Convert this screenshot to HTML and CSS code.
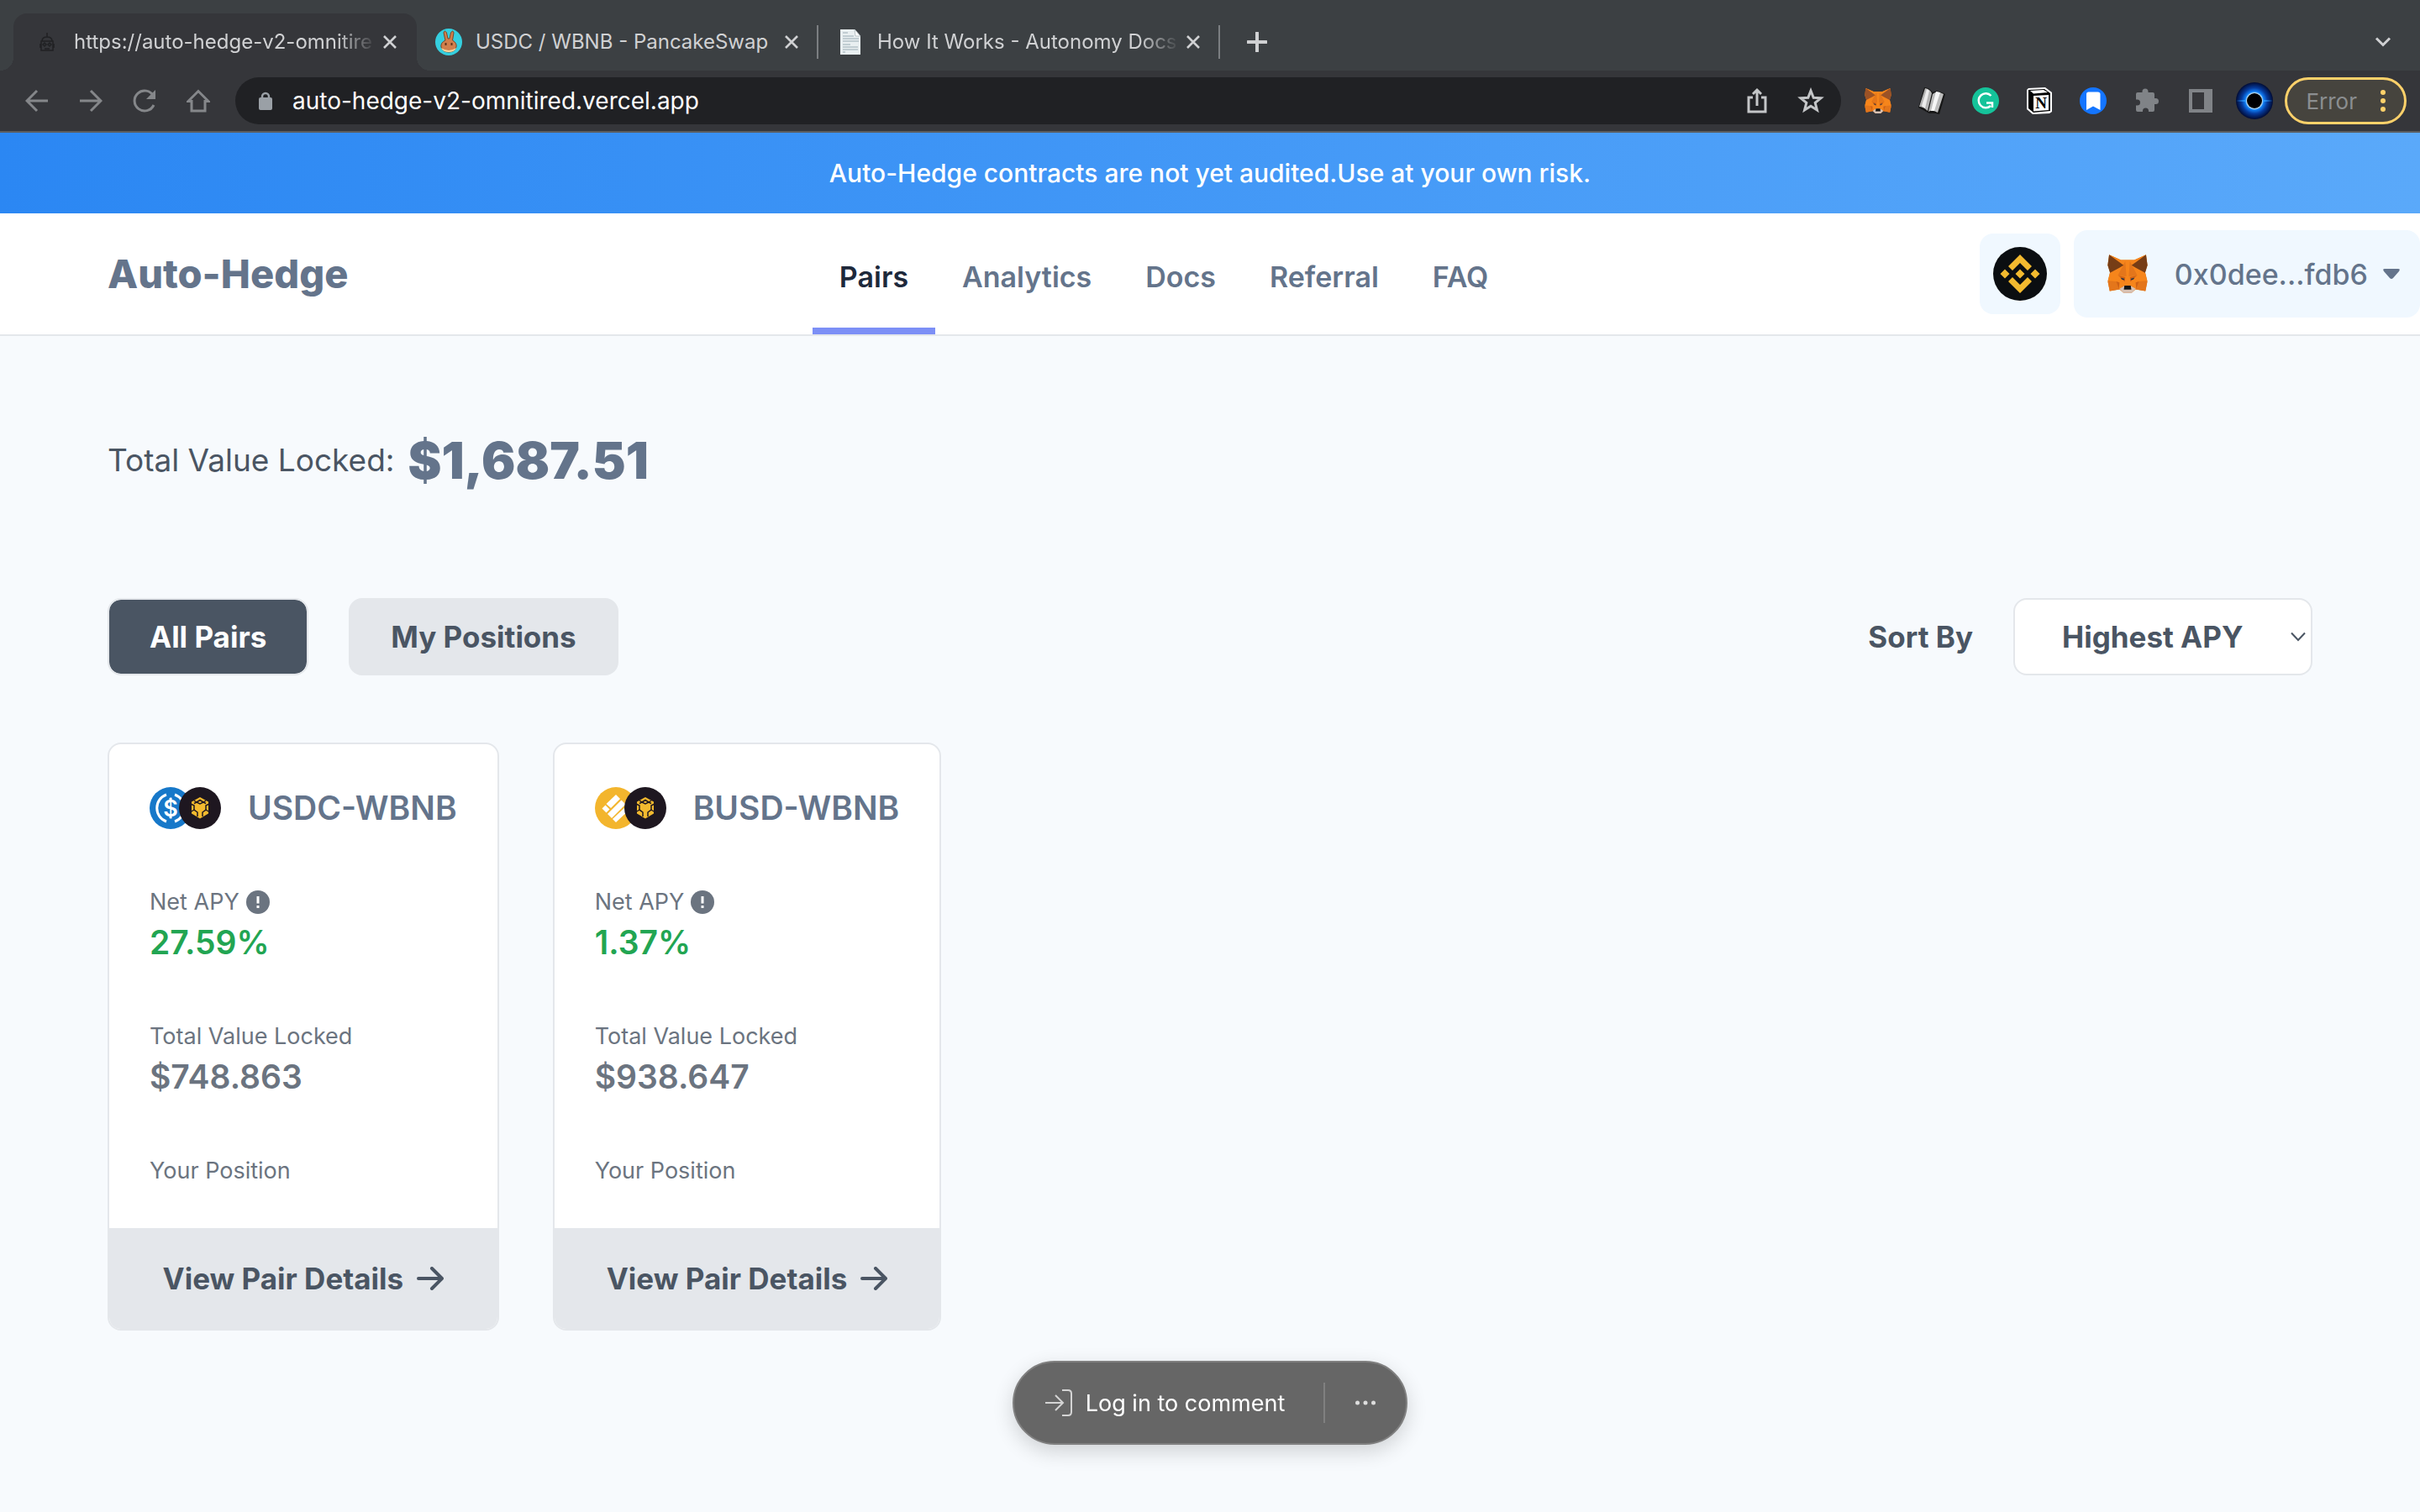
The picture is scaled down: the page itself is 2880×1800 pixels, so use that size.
FILE: index.html
```html
<!DOCTYPE html>
<html lang="en">
<head>
<meta charset="utf-8">
<title>Auto-Hedge</title>
<meta name="viewport" content="width=device-width, initial-scale=1">
<link rel="stylesheet" href="styles.css">
</head>
<body>
<svg class="defs" aria-hidden="true">
  <symbol id="fox" viewBox="0 0 140 132">
    <path fill="#e2761b" d="M6 0 47 18H93L134 0 139 36 131 60 139 92 132 126 98 120 84 132H56L42 120 8 126 1 92 9 60 1 36Z"/>
    <path fill="#f6851b" d="M47 18H93L134 0 98 44 131 62 138 90 104 93 98 120 84 108H56L42 120 36 93 2 90 9 62 42 44 6 0Z"/>
    <path fill="#e4761b" d="M62 22 66 75 36 72ZM78 22 74 75 104 72ZM31 96 42 120 8 126 2 94ZM109 96 98 120 132 126 138 94Z"/>
    <path fill="#cd6116" d="M31 93 42 96 40 118ZM109 93 98 96 100 118ZM38 72 62 78 60 94ZM102 72 78 78 80 94Z"/>
    <path fill="currentColor" d="M6 0 56 36 43 44 9 62 1 36ZM134 0 84 36 97 44 131 62 139 36Z"/>
    <path fill="#233447" d="M46 80 58 83 59 88 50 86ZM94 80 82 83 81 88 90 86Z"/>
    <path fill="#d7c1b3" d="M42 118 58 108H82L98 118 84 132H56Z"/>
    <path fill="#161616" d="M59 107H81L83 121H57Z"/>
  </symbol>
  <symbol id="close" viewBox="0 0 16 16"><path d="M1 1 15 15M15 1 1 15" stroke="currentColor" stroke-width="2.6" fill="none"/></symbol>
  <symbol id="wbnb" viewBox="0 0 50 50">
    <circle cx="25" cy="25" r="25" fill="#1e1720"/>
    <path fill="#f3ba2f" d="M25 12 35 17.500V31.500L25 37.500 15 31.500V17.500Z"/>
    <path fill="none" stroke="#1e1720" stroke-width="1.500" d="M14 20 18 22V27L22 30V35M36 20 32 22V27L28 30V35M18 19.500 21 18 25 20 29 18 32 19.500M21 18 25 15.500 29 18M21 18 18 16M29 18 32 16M15 29 18 27M35 29 32 27"/>
  </symbol>
  <symbol id="info" viewBox="0 0 28 28"><circle cx="14" cy="14" r="14" fill="currentColor"/><path d="M14 7V15.500M14 18V21" stroke="#fff" stroke-width="3"/></symbol>
  <symbol id="arrow" viewBox="0 0 32 28"><path d="M2 14H30M18 2 30 14 18 26" fill="none" stroke="currentColor" stroke-width="4" stroke-linecap="round" stroke-linejoin="round"/></symbol>
</svg>

<div class="browser">
  <div class="tabstrip">
    <div class="tab tab-active">
      <svg class="tab-icon" viewBox="0 0 32 32"><g fill="none" stroke="#202123" stroke-width="1.500"><path d="M16 5V10M10 15Q10 10 16 10T22 15M9 15H23V26H9ZM8 18V23M24 18V23"/><path d="m11 19 2-2 2 2-2 2ZM17 19l2-2 2 2-2 2ZM13 24H19"/></g></svg>
      <span class="tab-title fade">https://auto-hedge-v2-omnitire</span>
      <button class="tab-close" aria-label="Close tab"><svg><use href="#close"/></svg></button>
    </div>
    <div class="tab">
      <svg class="tab-icon" viewBox="0 0 32 32"><circle cx="16" cy="16" r="16" fill="#35cfdf"/><path d="M12 14 10 5Q11 1 13.500 5L15 12H17L18.500 5Q21 1 22 5L20.500 14Q26 17 25 22 23 28 16 28T7 22Q6 17 12 14Z" fill="#d17f4c" stroke="#7a4526"/><path d="M7 23Q16 29 25 23 23 28 16 28T7 23Z" fill="#f6d8a0"/><path d="M12.500 17V20M19.500 17V20" stroke="#60341c" stroke-width="2"/></svg>
      <span class="tab-title">USDC / WBNB - PancakeSwap</span>
      <button class="tab-close" aria-label="Close tab"><svg><use href="#close"/></svg></button>
    </div>
    <div class="tab tab-ruled">
      <svg class="tab-icon" viewBox="0 0 32 32"><path d="M4 1H21L28 9V31H4Z" fill="#e9eff1"/><path d="M21 1 22 9H28Z" fill="#fff" stroke="#b9c3c6"/><path d="M7 5H13M7 9H20M7 12H26M7 15H26M7 19H16M7 22H25M7 25H25M7 28H10" stroke="#b4c2c7" stroke-width="1.500"/></svg>
      <span class="tab-title fade">How It Works - Autonomy Docs</span>
      <button class="tab-close" aria-label="Close tab"><svg><use href="#close"/></svg></button>
    </div>
    <button class="new-tab" aria-label="New tab"><svg viewBox="0 0 24 24"><path d="M12 1V23M1 12H23" stroke="currentColor" stroke-width="4" stroke-linecap="round"/></svg></button>
    <button class="tab-menu" aria-label="Search tabs"><svg viewBox="0 0 18 12"><path d="M1 1.500 9 9.500 17 1.500" fill="none" stroke="currentColor" stroke-width="3"/></svg></button>
  </div>
  <div class="toolbar">
    <div class="nav-buttons">
      <button aria-label="Back"><svg viewBox="0 0 28 28"><path d="M27 14H3M14 2 2 14 14 26"/></svg></button>
      <button aria-label="Forward"><svg viewBox="0 0 28 28"><path d="M1 14H25M14 2 26 14 14 26"/></svg></button>
      <button aria-label="Reload"><svg viewBox="0 0 28 28"><path d="M24.500 8A12 12 0 1 0 25 19"/><path class="solid" d="M27 1V12H16Z"/></svg></button>
      <button aria-label="Home"><svg viewBox="0 0 28 28"><path d="M2 14.500 14 2.500 26 14.500H22V26H6V14.500Z"/></svg></button>
    </div>
    <div class="omnibox">
      <svg class="lock" viewBox="0 0 16 22"><path d="M4 9V6A4 4 0 0 1 12 6V9" fill="none" stroke="#9aa0a6" stroke-width="2.500"/><rect y="7" width="16" height="15" rx="2" fill="#9aa0a6"/></svg>
      <input class="address" type="text" aria-label="Address" value="auto-hedge-v2-omnitired.vercel.app">
      <button aria-label="Share"><svg viewBox="0 0 32 32"><path d="M11 12H6V29H26V12H21M16 22V3M11 8 16 3 21 8" /></svg></button>
      <button aria-label="Bookmark"><svg viewBox="0 0 32 32"><path d="M16 4 19.200 12.200 28 12.800 21.200 18.400 23.400 27 16 22.200 8.600 27 10.800 18.400 4 12.800 12.800 12.200Z"/></svg></button>
    </div>
    <div class="extensions">
      <button class="ext-fox" aria-label="MetaMask"><svg><use href="#fox"/></svg></button>
      <button aria-label="Reader"><svg viewBox="0 0 32 32"><path d="M7 0Q13 0 17 6 22 2 32 8L25 32Q18 30 13 31L0 24Z" fill="#161616"/><path d="M8 1Q14 2 16 7L11 28Q6 23 1 23Z" fill="#b4b4b4"/><path d="M10 2 13 4 8 25 4 22Z" fill="#ececec"/><path d="M17 8Q22 3 30 8L23 30Q16 26 12 29Z" fill="#bdbdbd"/><path d="M21 5 26 6 19 28 15 28Z" fill="#f6f6f6"/></svg></button>
      <button aria-label="Grammarly"><svg viewBox="0 0 32 32"><circle cx="16" cy="16" r="16" fill="#15c39a"/><path d="M22.500 10A8.500 8.500 0 1 0 22 22M17 18.500H24V24" fill="none" stroke="#fff" stroke-width="2.500"/></svg></button>
      <button aria-label="Notion"><svg viewBox="0 0 32 32"><path d="M3 1 23 0 31 6V29L28 31 8 32 1 26V3Z" fill="#fff"/><path d="M3 3 22 2 29 7V28L9 30 3 25Z" fill="#000"/><path d="M5 4 21 3 26 6 9 7.500ZM9 10 27 9V27L9 28.500Z" fill="#fff"/><text x="18" y="25" text-anchor="middle" class="notion-mark">N</text></svg></button>
      <button aria-label="Saved pages"><svg viewBox="0 0 32 32"><circle cx="16" cy="16" r="16" fill="#1475ff"/><path d="M8 8Q8 5.500 10.500 5.500H21.500Q24.500 5.500 24.500 8V27L16 22.500 8 27Z" fill="#fff"/></svg></button>
      <button aria-label="Extensions"><svg viewBox="0 0 32 32"><path d="M3 8Q3 6 5 6H10.500V5A3.500 3.500 0 0 1 17.500 5V6H23Q25 6 25 8V13H26.500A3.500 3.500 0 0 1 26.500 20H25V27Q25 29 23 29H18V28A3.500 3.500 0 0 0 11 28V29H5Q3 29 3 27V21.500H4.500A3.500 3.500 0 0 0 4.500 14.500H3Z" fill="#808387"/></svg></button>
      <button aria-label="Side panel"><svg viewBox="0 0 32 32"><path d="M2 2H30V30H2ZM6 6V26H20V6Z" fill="#808387" fill-rule="evenodd"/></svg></button>
    </div>
    <button class="avatar" aria-label="Profile"><svg viewBox="0 0 44 44"><defs><radialGradient id="eclipse"><stop offset=".4" stop-color="#e8fbff"/><stop offset=".5" stop-color="#0f7ef5"/><stop offset=".7" stop-color="#053a9c"/><stop offset="1" stop-color="#010b33"/></radialGradient></defs><circle cx="22" cy="22" r="22" fill="url(#eclipse)"/><path d="M0 22 12 21V23ZM44 22 32 21V23Z" fill="#2c9bff"/><circle cx="22" cy="22" r="9" fill="#000"/></svg></button>
    <button class="error-pill">Error<svg viewBox="0 0 6 26"><circle cx="3" cy="3" r="3"/><circle cx="3" cy="13" r="3"/><circle cx="3" cy="23" r="3"/></svg></button>
  </div>
</div>

<div class="banner">Auto-Hedge contracts are not yet audited.Use at your own risk.</div>

<header class="header">
  <a class="brand" href="#">Auto-Hedge</a>
  <nav class="nav">
    <a class="current" href="#">Pairs</a>
    <a href="#">Analytics</a>
    <a href="#">Docs</a>
    <a href="#">Referral</a>
    <a href="#">FAQ</a>
  </nav>
  <div class="account">
    <button class="chain" aria-label="BNB Chain"><svg viewBox="0 0 64 64"><circle cx="32" cy="32" r="32" fill="#0b0e11"/><path fill="#f3ba2f" d="M32 9 46 23 41 28 32 19 23 28 18 23ZM32 55 46 41 41 36 32 45 23 36 18 41ZM32 26.500 37.500 32 32 37.500 26.500 32ZM14 26.500 19.500 32 14 37.500 8.500 32ZM50 26.500 55.500 32 50 37.500 44.500 32Z"/></svg></button>
    <button class="wallet"><svg class="wallet-fox"><use href="#fox"/></svg><span>0x0dee...fdb6</span><svg class="caret" viewBox="0 0 20 12"><path d="M2 0H18Q21 0 19 3L12 11Q10 13 8 11L1 3Q-1 0 2 0Z" fill="currentColor"/></svg></button>
  </div>
</header>

<main class="main">
  <p class="total">Total Value Locked: <strong>$1,687.51</strong></p>

  <div class="controls">
    <button class="filter filter-on">All Pairs</button>
    <button class="filter">My Positions</button>
    <label class="sort-label" for="sort">Sort By</label>
    <span class="sort">
      <select id="sort"><option>Highest APY</option></select>
      <svg viewBox="0 0 18 12"><path d="M1 1.500 9 10 17 1.500" fill="none" stroke="currentColor" stroke-width="2"/></svg>
    </span>
  </div>

  <div class="cards">
    <article class="card">
      <div class="card-body">
        <h2 class="pair"><span class="tokens">
          <svg viewBox="0 0 50 50"><circle cx="25" cy="25" r="25" fill="#1778c9"/><path d="M20 9A17 17 0 0 0 20 41M30 9A17 17 0 0 1 30 41" fill="none" stroke="#fff" stroke-width="3"/><path d="M25 13V17M25 33V37" stroke="#fff" stroke-width="3"/><text x="25" y="35" text-anchor="middle" class="usdc-mark">$</text></svg>
          <svg><use href="#wbnb"/></svg></span>USDC-WBNB</h2>
        <dl class="stat"><dt>Net APY <svg><use href="#info"/></svg></dt><dd class="gain">27.59%</dd></dl>
        <dl class="stat"><dt>Total Value Locked</dt><dd>$748.863</dd></dl>
        <dl class="stat"><dt>Your Position</dt></dl>
      </div>
      <a class="details" href="#">View Pair Details <svg><use href="#arrow"/></svg></a>
    </article>
    <article class="card">
      <div class="card-body">
        <h2 class="pair"><span class="tokens">
          <svg viewBox="0 0 50 50"><circle cx="25" cy="25" r="25" fill="#f3b52d"/><g fill="#fff"><path d="M25 9 30 14 19 25 13.500 20Z"/><path d="M12.500 21.500 17.500 26.500 13.500 30.500 8.500 25.500Z"/><path d="M31.500 15.500 36.500 20.500 20 37 15 32Z"/><path d="M38 22 42 26 25 42 21 38Z"/></g></svg>
          <svg><use href="#wbnb"/></svg></span>BUSD-WBNB</h2>
        <dl class="stat"><dt>Net APY <svg><use href="#info"/></svg></dt><dd class="gain">1.37%</dd></dl>
        <dl class="stat"><dt>Total Value Locked</dt><dd>$938.647</dd></dl>
        <dl class="stat"><dt>Your Position</dt></dl>
      </div>
      <a class="details" href="#">View Pair Details <svg><use href="#arrow"/></svg></a>
    </article>
  </div>
</main>

<div class="comment-bar">
  <button class="login"><svg viewBox="0 0 32 34"><path d="M0 17H20M12 8 21 17 12 26M20 2H27Q31 2 31 6V28Q31 32 27 32H20" fill="none" stroke="#d4d4d4" stroke-width="2"/></svg>Log in to comment</button>
  <button class="more" aria-label="More"><svg viewBox="0 0 24 6"><circle cx="2.500" cy="3" r="2.500"/><circle cx="12" cy="3" r="2.500"/><circle cx="21.500" cy="3" r="2.500"/></svg></button>
</div>
</body>
</html>
```
FILE: styles.css
```css
* { box-sizing: border-box; }

body {
  margin: 0;
  min-height: 100vh;
  background: #f7fafd;
  color: #4a5563;
  font-family: Inter, "Liberation Sans", sans-serif;
}

button, input, select { font: inherit; color: inherit; }
button { display: flex; align-items: center; justify-content: center; padding: 0; border: 0; background: none; cursor: pointer; white-space: nowrap; }
a { color: inherit; text-decoration: none; }
p, h2, dl, dd { margin: 0; }
svg { display: block; flex: none; }
.defs { position: absolute; width: 0; height: 0; }

/* Browser frame */
.browser { border-bottom: 2px solid #5c5e60; background: #35363a; color: #d0d1d3; font-size: 24px; }
.tabstrip { display: flex; align-items: flex-end; height: 84px; padding: 0 32px 0 16px; background: #3c4043; }
.tab { position: relative; display: flex; align-items: center; gap: 16px; width: 478px; height: 68px; padding: 0 24px 0 22px; }
.tab-active { width: 480px; padding-left: 24px; border-radius: 16px 16px 0 0; background: #35363a; }
.tab-active::before, .tab-active::after { content: ""; position: absolute; bottom: 0; width: 16px; height: 16px; }
.tab-active::before { right: 100%; background: radial-gradient(circle at 0 0, transparent 16px, #35363a 16px); }
.tab-active::after { left: 100%; background: radial-gradient(circle at 100% 0, transparent 16px, #35363a 16px); }
.tab-ruled::before, .tab-ruled::after { content: ""; position: absolute; top: 14px; width: 2px; height: 40px; background: #7b7e81; }
.tab-ruled::before { left: -2px; }
.tab-ruled::after { right: 0; }
.tab-icon { width: 32px; height: 32px; }
.tab-title { flex: 1; white-space: nowrap; line-height: 32px; }
.fade { margin-right: -8px; -webkit-mask-image: linear-gradient(to left, transparent, #000 48px); mask-image: linear-gradient(to left, transparent, #000 48px); }
.tab-close svg { width: 16px; height: 16px; }
.new-tab { width: 88px; height: 68px; }
.new-tab svg { width: 24px; height: 24px; }
.tab-menu { height: 68px; margin-left: auto; }
.tab-menu svg { width: 24px; height: 12px; }

.toolbar { display: flex; align-items: center; height: 72px; padding: 0 16px 0 30px; }
.nav-buttons { display: flex; gap: 36px; width: 250px; }
.nav-buttons svg { width: 28px; height: 28px; fill: none; stroke: #85878a; stroke-width: 3; }
.nav-buttons .solid { fill: #85878a; stroke: none; }
.omnibox { flex: 1; display: flex; align-items: center; gap: 32px; height: 56px; padding: 0 20px 0 28px; border-radius: 28px; background: #202124; }
.omnibox button svg { width: 32px; height: 32px; fill: none; stroke: #c4c6c8; stroke-width: 3; }
.omnibox .lock { width: 16px; height: 22px; }
.address { flex: 1; min-width: 0; margin-left: -8px; padding: 0; border: 0; background: none; color: #fff; font-size: 28px; line-height: 40px; outline: 0; }
.extensions { display: flex; gap: 32px; padding: 0 26px 0 28px; }
.extensions svg { width: 32px; height: 32px; }
.ext-fox { color: #9b5226; }
.notion-mark { font: bold 19px "Liberation Serif", serif; }
.avatar svg { width: 44px; height: 44px; }
.error-pill { gap: 28px; height: 56px; margin-left: 14px; padding: 0 22px; border: 3px solid #fdd16a; border-radius: 28px; background: #46443e; color: #8b8e90; font-size: 26px; }
.error-pill svg { width: 6px; height: 26px; fill: #fdd16a; }

/* Site header */
.banner { padding: 24px; background: linear-gradient(90deg, #2b87f3, #5aa9fa); color: #fff; font-size: 30px; font-weight: 500; line-height: 48px; text-align: center; }
.header { display: flex; align-items: center; justify-content: space-between; height: 146px; padding-left: 128px; border-bottom: 2px solid #e4e7eb; background: #fff; color: #64748b; }
.brand { font-size: 47px; font-weight: 800; line-height: 56px; }
.nav { display: flex; align-self: stretch; font-size: 34px; font-weight: 600; }
.nav a { display: flex; align-items: center; padding: 14px 32px 0; border-bottom: 8px solid transparent; }
.nav .current { border-color: #7c8ff6; color: #1e293b; }
.account { display: flex; align-items: center; gap: 16px; }
.account button { border-radius: 16px; background: #f0f8ff; }
.chain { width: 96px; height: 96px; }
.chain svg { width: 64px; height: 64px; }
.wallet { height: 104px; padding: 0 24px 0 40px; font-size: 34px; font-weight: 500; }
.wallet-fox { width: 48px; height: 46px; margin-right: 32px; color: #763d16; }
.caret { width: 20px; height: 12px; margin-left: 18px; }

/* Pair list */
.main { padding: 112px 128px 128px; }
.total { display: flex; align-items: center; gap: 16px; margin-bottom: 128px; font-size: 37px; line-height: 72px; }
.total strong { color: #64748b; font-size: 60px; font-weight: 900; }
.controls { display: flex; align-items: center; margin-bottom: 80px; font-size: 35px; font-weight: 700; }
.filter { height: 92px; margin-right: 48px; padding: 0 48px; border: 2px solid #e4e7eb; border-radius: 16px; background: #e4e7eb; }
.filter-on { background: #4a5563 padding-box; color: #fff; }
.sort-label { margin-left: auto; margin-right: 48px; }
.sort { display: grid; align-items: center; }
.sort select { grid-area: 1 / 1; width: 356px; height: 92px; padding: 0 56px; border: 2px solid #e4e7eb; border-radius: 16px; background: #fff; appearance: none; }
.sort svg { grid-area: 1 / 1; justify-self: end; width: 18px; height: 12px; margin-right: 8px; pointer-events: none; }
.cards { display: flex; align-items: flex-start; flex-wrap: wrap; gap: 64px; }
.card { border: 2px solid #e4e7eb; border-radius: 16px; background: #fff; overflow: hidden; }
.card-body { display: flex; flex-direction: column; gap: 64px; padding: 48px; color: #6b7480; }
.pair { display: flex; align-items: center; gap: 32px; color: #64748b; font-size: 39px; font-weight: 600; line-height: 56px; white-space: nowrap; }
.tokens { display: flex; }
.tokens svg { width: 50px; height: 50px; }
.tokens svg + svg { margin-left: -15px; }
.usdc-mark { font: 600 27px Inter, sans-serif; fill: #fff; }
.stat dt { display: flex; align-items: center; gap: 8px; font-size: 27px; line-height: 40px; }
.stat dt svg { width: 28px; height: 28px; }
.stat dd { font-size: 39px; font-weight: 600; line-height: 56px; }
.stat .gain { color: #22a552; }
.details { display: flex; align-items: center; justify-content: center; gap: 16px; height: 120px; background: #e4e7eb; font-size: 35px; font-weight: 700; }
.details svg { width: 32px; height: 28px; }

/* Floating comment bar */
.comment-bar { position: fixed; bottom: 80px; left: 0; right: 0; display: flex; align-items: center; width: max-content; height: 100px; margin: 0 auto; border: 2px solid #808080; border-radius: 50px; background: #666; box-shadow: 0 8px 24px rgba(0, 0, 0, .16); color: #fff; font-size: 27px; }
.login { gap: 16px; padding: 0 46px 0 37px; }
.login svg { width: 32px; height: 34px; }
.more { height: 48px; padding: 0 36px; border-left: 2px solid #808080; }
.more svg { width: 24px; height: 6px; fill: #ddd; }
```
